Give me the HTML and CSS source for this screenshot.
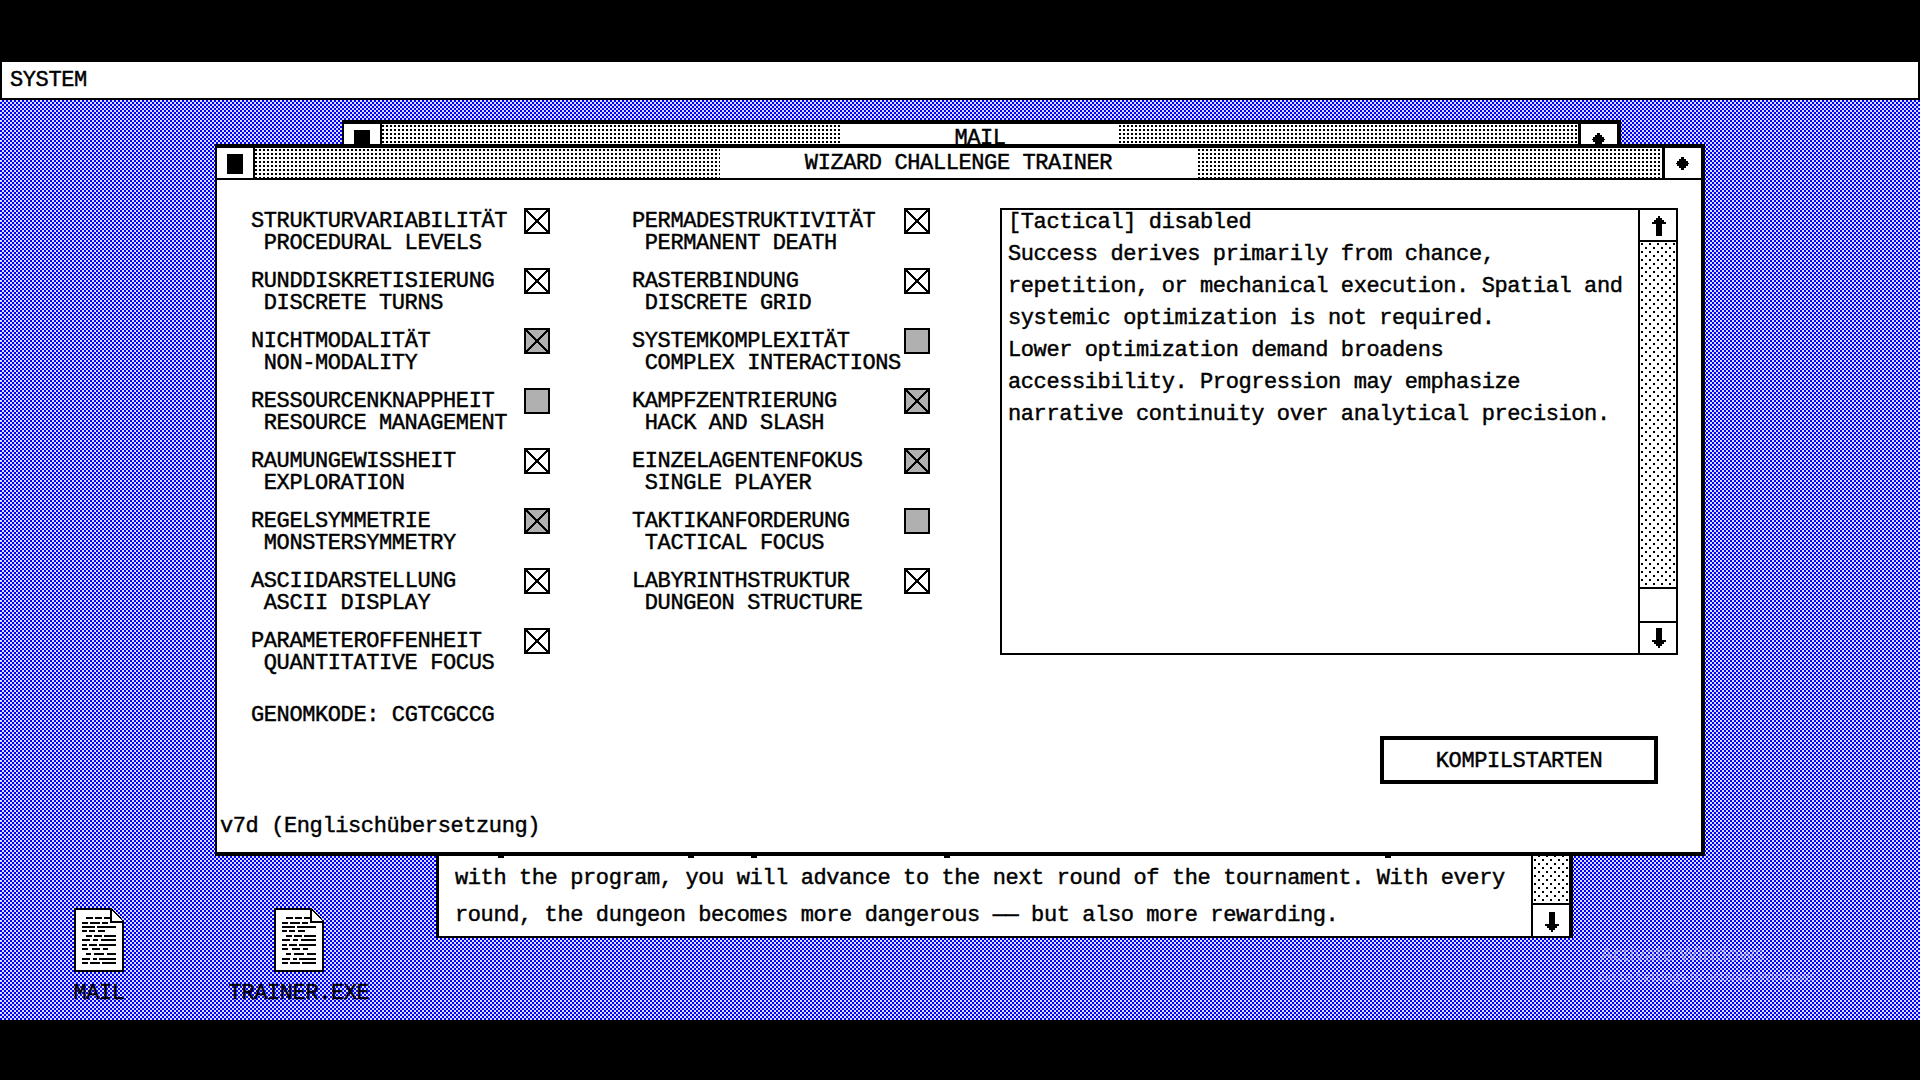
FILE: index.html
```html
<!DOCTYPE html>
<html lang="de">
<head>
<meta charset="utf-8">
<title>Wizard Challenge Trainer</title>
<link rel="stylesheet" href="styles.css">
</head>
<body>
<div class="screen">
  <header class="menubar">SYSTEM</header>
  <main class="desktop">
    <div class="desk-icon desk-icon-mail">
      <svg class="doc" viewBox="0 0 50 64" width="50" height="64"><path class="doc-sheet" d="M1 1H37L49 14V63H1Z"/><path class="doc-fold" d="M37 1V14H49"/><path class="doc-text" d="M12 10h7M21 10h7M30 10h6M8 15h6M16 15h10M28 15h6M8 19h13M23 19h19M8 23h5M15 23h6M24 23h7M12 28h6M20 28h8M30 28h12M8 32h8M19 32h5M27 32h15M8 37h5M15 37h8M25 37h17M8 41h6M18 41h8M29 41h5M12 46h5M20 46h10M33 46h9M8 51h8M19 51h4M25 51h17M8 55h6M16 55h10M28 55h14"/></svg>
      <span class="desk-label">MAIL</span>
    </div>
    <div class="desk-icon desk-icon-trainer">
      <svg class="doc" viewBox="0 0 50 64" width="50" height="64"><path class="doc-sheet" d="M1 1H37L49 14V63H1Z"/><path class="doc-fold" d="M37 1V14H49"/><path class="doc-text" d="M12 10h7M21 10h7M30 10h6M8 15h6M16 15h10M28 15h6M8 19h13M23 19h19M8 23h5M15 23h6M24 23h7M12 28h6M20 28h8M30 28h12M8 32h8M19 32h5M27 32h15M8 37h5M15 37h8M25 37h17M8 41h6M18 41h8M29 41h5M12 46h5M20 46h10M33 46h9M8 51h8M19 51h4M25 51h17M8 55h6M16 55h10M28 55h14"/></svg>
      <span class="desk-label">TRAINER.EXE</span>
    </div>

    <section class="mail-head">
      <div class="titlebar titlebar-mail">
        <div class="win-btn"><span class="close-mark"></span></div>
        <div class="stripes"></div>
        <div class="win-title win-title-mail">MAIL</div>
        <div class="stripes"></div>
        <div class="win-btn win-btn-right"><svg class="diamond" viewBox="0 0 13 13" width="13" height="13"><path d="M5 0h3v2h2v2h2v2h1v1h-1v2h-2v2H8v2H5v-2H3V9H1V7H0V6h1V4h2V2h2z"/></svg></div>
      </div>
    </section>

    <section class="mail-body">
      <span class="tick tick-a"></span><span class="tick tick-b"></span><span class="tick tick-c"></span><span class="tick tick-d"></span><span class="tick tick-e"></span>
      <div class="mail-text">
        <p>with the program, you will advance to the next round of the tournament. With every</p>
        <p>round, the dungeon becomes more dangerous —— but also more rewarding.</p>
      </div>
      <div class="scrollbar scrollbar-mail">
        <div class="scroll-track"></div>
        <div class="scroll-btn scroll-btn-mail"><svg class="arrow" viewBox="0 0 14 20" width="14" height="20"><path d="M4 0h6v12h4v2h-2v2h-2v2H8v2H6v-2H4v-2H2v-2H0v-2h4z"/></svg></div>
      </div>
    </section>

    <section class="trainer">
      <div class="titlebar">
        <div class="win-btn"><span class="close-mark"></span></div>
        <div class="stripes"></div>
        <div class="win-title">WIZARD CHALLENGE TRAINER</div>
        <div class="stripes"></div>
        <div class="win-btn win-btn-right"><svg class="diamond" viewBox="0 0 13 13" width="13" height="13"><path d="M5 0h3v2h2v2h2v2h1v1h-1v2h-2v2H8v2H5v-2H3V9H1V7H0V6h1V4h2V2h2z"/></svg></div>
      </div>
      <div class="trainer-body">
        <div class="trainer-grid">
          <div class="col">
            <div class="trait"><div class="trait-text">STRUKTURVARIABILITÄT<span class="sub">PROCEDURAL LEVELS</span></div><svg class="box" viewBox="0 0 26 26"><path d="M2 2L24 24M24 2L2 24"/></svg></div>
            <div class="trait"><div class="trait-text">RUNDDISKRETISIERUNG<span class="sub">DISCRETE TURNS</span></div><svg class="box" viewBox="0 0 26 26"><path d="M2 2L24 24M24 2L2 24"/></svg></div>
            <div class="trait"><div class="trait-text">NICHTMODALITÄT<span class="sub">NON-MODALITY</span></div><svg class="box box-grey" viewBox="0 0 26 26"><path d="M2 2L24 24M24 2L2 24"/></svg></div>
            <div class="trait"><div class="trait-text">RESSOURCENKNAPPHEIT<span class="sub">RESOURCE MANAGEMENT</span></div><svg class="box box-grey" viewBox="0 0 26 26"></svg></div>
            <div class="trait"><div class="trait-text">RAUMUNGEWISSHEIT<span class="sub">EXPLORATION</span></div><svg class="box" viewBox="0 0 26 26"><path d="M2 2L24 24M24 2L2 24"/></svg></div>
            <div class="trait"><div class="trait-text">REGELSYMMETRIE<span class="sub">MONSTERSYMMETRY</span></div><svg class="box box-grey" viewBox="0 0 26 26"><path d="M2 2L24 24M24 2L2 24"/></svg></div>
            <div class="trait"><div class="trait-text">ASCIIDARSTELLUNG<span class="sub">ASCII DISPLAY</span></div><svg class="box" viewBox="0 0 26 26"><path d="M2 2L24 24M24 2L2 24"/></svg></div>
            <div class="trait"><div class="trait-text">PARAMETEROFFENHEIT<span class="sub">QUANTITATIVE FOCUS</span></div><svg class="box" viewBox="0 0 26 26"><path d="M2 2L24 24M24 2L2 24"/></svg></div>
            <div class="genome">GENOMKODE: CGTCGCCG</div>
          </div>
          <div class="col">
            <div class="trait"><div class="trait-text">PERMADESTRUKTIVITÄT<span class="sub">PERMANENT DEATH</span></div><svg class="box" viewBox="0 0 26 26"><path d="M2 2L24 24M24 2L2 24"/></svg></div>
            <div class="trait"><div class="trait-text">RASTERBINDUNG<span class="sub">DISCRETE GRID</span></div><svg class="box" viewBox="0 0 26 26"><path d="M2 2L24 24M24 2L2 24"/></svg></div>
            <div class="trait"><div class="trait-text">SYSTEMKOMPLEXITÄT<span class="sub">COMPLEX INTERACTIONS</span></div><svg class="box box-grey" viewBox="0 0 26 26"></svg></div>
            <div class="trait"><div class="trait-text">KAMPFZENTRIERUNG<span class="sub">HACK AND SLASH</span></div><svg class="box box-grey" viewBox="0 0 26 26"><path d="M2 2L24 24M24 2L2 24"/></svg></div>
            <div class="trait"><div class="trait-text">EINZELAGENTENFOKUS<span class="sub">SINGLE PLAYER</span></div><svg class="box box-grey" viewBox="0 0 26 26"><path d="M2 2L24 24M24 2L2 24"/></svg></div>
            <div class="trait"><div class="trait-text">TAKTIKANFORDERUNG<span class="sub">TACTICAL FOCUS</span></div><svg class="box box-grey" viewBox="0 0 26 26"></svg></div>
            <div class="trait"><div class="trait-text">LABYRINTHSTRUKTUR<span class="sub">DUNGEON STRUCTURE</span></div><svg class="box" viewBox="0 0 26 26"><path d="M2 2L24 24M24 2L2 24"/></svg></div>
          </div>
          <div class="side">
            <div class="readout">
              <div class="readout-text">
                <p>[Tactical] disabled</p>
                <p>Success derives primarily from chance,</p>
                <p>repetition, or mechanical execution. Spatial and</p>
                <p>systemic optimization is not required.</p>
                <p>Lower optimization demand broadens</p>
                <p>accessibility. Progression may emphasize</p>
                <p>narrative continuity over analytical precision.</p>
              </div>
              <div class="scrollbar">
                <div class="scroll-btn scroll-btn-up"><svg class="arrow arrow-up" viewBox="0 0 14 20" width="14" height="20"><path d="M4 0h6v12h4v2h-2v2h-2v2H8v2H6v-2H4v-2H2v-2H0v-2h4z"/></svg></div>
                <div class="scroll-track"></div>
                <div class="scroll-thumb"></div>
                <div class="scroll-btn scroll-btn-down"><svg class="arrow" viewBox="0 0 14 20" width="14" height="20"><path d="M4 0h6v12h4v2h-2v2h-2v2H8v2H6v-2H4v-2H2v-2H0v-2h4z"/></svg></div>
              </div>
            </div>
            <button class="compile">KOMPILSTARTEN</button>
          </div>
        </div>
        <div class="version">v7d (Englischübersetzung)</div>
      </div>
    </section>

    <div class="watermark">
      <div class="wm-big">Activate Windows</div>
      <div class="wm-small">Go to Settings to activate Windows.</div>
    </div>
  </main>
</div>
</body>
</html>
```
FILE: styles.css
```css
* { box-sizing: border-box; }
html, body { margin: 0; padding: 0; background: #000; }
body {
  font-family: "Liberation Mono", "DejaVu Sans Mono", monospace;
  font-size: 22px;
  letter-spacing: -0.4px;
  font-weight: 400;
  -webkit-text-stroke: 0.45px #000;
  color: #000;
}
p { margin: 0; }

.screen {
  width: 1920px;
  height: 1080px;
  padding: 62px 0 60px;
  display: flex;
  flex-direction: column;
  overflow: hidden;
}
.menubar {
  height: 38px;
  flex: none;
  background: #fff;
  border: solid #000;
  border-width: 0 2px 2px;
  padding-left: 8px;
  line-height: 37px;
}
.desktop {
  position: relative;
  flex: 1;
  overflow: hidden;
  background: conic-gradient(#0000ff 25%, #dcdcff 0 50%, #0000ff 0 75%, #dcdcff 0) 0 0 / 4px 4px;
}

/* desktop icons */
.desk-icon {
  position: absolute;
  top: 808px;
  width: 160px;
  display: flex;
  flex-direction: column;
  align-items: center;
  gap: 11px;
}
.desk-icon-mail { left: 19px; }
.desk-icon-trainer { left: 219px; }
.desk-label { line-height: 22px; }
.doc { display: block; shape-rendering: crispEdges; }
.doc-sheet { fill: #fff; stroke: #000; stroke-width: 2.5; }
.doc-fold { fill: #fff; stroke: #000; stroke-width: 2; }
.doc-text { fill: none; stroke: #000; stroke-width: 2; }

/* title bars */
.titlebar {
  display: flex;
  height: 32px;
  flex: none;
  background: #fff;
  border-bottom: 2px solid #000;
}
.win-btn {
  width: 38px;
  flex: none;
  display: flex;
  align-items: center;
  justify-content: center;
  border-right: 2px solid #000;
}
.win-btn-right {
  width: 39px;
  padding-right: 2px;
  border-right: 0;
  border-left: 3px solid #000;
}
.close-mark {
  width: 16px;
  height: 20px;
  margin-top: 2px;
  background: #000;
}
.diamond { display: block; shape-rendering: crispEdges; }
.stripes {
  flex: 1;
  background: conic-gradient(at 2px 2px, transparent 75%, #000 0) 0 1px / 4px 4px, #fff;
}
.win-title {
  width: 478px;
  flex: none;
  text-align: center;
  line-height: 32px;
}
.win-title-mail { width: 277px; line-height: 30px; }

/* back window */
.mail-head {
  position: absolute;
  left: 342px;
  top: 20px;
  width: 1279px;
  height: 60px;
  border: solid #000;
  border-width: 4px 4px 0 2px;
  background: #fff;
}
.mail-body {
  position: absolute;
  left: 436px;
  top: 750px;
  width: 1137px;
  height: 88px;
  display: flex;
  background: #fff;
  border: solid #000;
  border-width: 0 4px 2px 3px;
}
.tick {
  position: absolute;
  top: 6px;
  width: 6px;
  height: 2px;
  background: #000;
}
.tick-a { left: 59px; }
.tick-b { left: 249px; }
.tick-c { left: 312px; }
.tick-d { left: 505px; }
.tick-e { left: 946px; }
.mail-text {
  flex: 1;
  padding: 10px 0 0 16px;
  line-height: 37px;
  white-space: nowrap;
}
.scrollbar {
  width: 38px;
  flex: none;
  display: flex;
  flex-direction: column;
  border-left: 2px solid #000;
  background: #fff;
}
.scrollbar-mail { width: 38px; }
.scroll-track {
  flex: 1;
  background:
    conic-gradient(at 2px 2px, transparent 75%, #000 0) 1px 1px / 8px 8px,
    conic-gradient(at 2px 2px, transparent 75%, #000 0) 5px 5px / 8px 8px,
    #fff;
}
.scroll-btn {
  flex: none;
  display: flex;
  align-items: center;
  justify-content: center;
  height: 31px;
  padding-left: 2px;
}
.scroll-btn-mail { height: 33px; border-top: 2px solid #000; padding-top: 2px; }
.scroll-btn-up { height: 32px; border-bottom: 2px solid #000; padding-top: 1px; }
.scroll-btn-down { height: 32px; border-top: 2px solid #000; }
.scroll-thumb { height: 34px; flex: none; border-top: 2px solid #000; }
.arrow { display: block; shape-rendering: crispEdges; }
.arrow-up { transform: scaleY(-1); }

/* front window */
.trainer {
  position: absolute;
  left: 215px;
  top: 44px;
  width: 1490px;
  height: 712px;
  display: flex;
  flex-direction: column;
  background: #fff;
  border: solid #000;
  border-width: 4px 4px 4px 2px;
}
.trainer-body {
  flex: 1;
  display: flex;
  flex-direction: column;
  justify-content: space-between;
}
.trainer-grid {
  display: grid;
  grid-template-columns: 299px 298px 678px;
  column-gap: 82px;
  padding: 28px 0 0 34px;
}
.trainer-grid .side { margin-left: -12px; }
.trait {
  height: 60px;
  display: flex;
  justify-content: space-between;
  align-items: flex-start;
}
.trait-text { line-height: 22px; padding-top: 3px; white-space: nowrap; }
.sub { display: block; padding-left: 12.8px; }
.box {
  width: 26px;
  height: 26px;
  flex: none;
  background: #fff;
  outline: 2px solid #000;
  outline-offset: -2px;
  shape-rendering: crispEdges;
}
.box path { fill: none; stroke: #000; stroke-width: 1.5; }
.box-grey { background: #b0b0b0; }
.genome { line-height: 22px; margin-top: 17px; }

.side { display: flex; flex-direction: column; align-items: flex-end; width: 678px; }
.readout {
  width: 678px;
  height: 447px;
  display: flex;
  overflow: hidden;
  border: 2px solid #000;
}
.readout-text {
  flex: 1;
  padding-left: 6px;
  margin-top: -3px;
  line-height: 32px;
  white-space: nowrap;
}
.compile {
  width: 278px;
  height: 48px;
  margin: 81px 20px 0 0;
  background: #fff;
  border: 4px solid #000;
  font: inherit;
  letter-spacing: inherit;
  color: #000;
  padding: 2px 0 0;
}
.version {
  padding: 0 0 14px 3px;
  line-height: 22px;
}

.watermark {
  position: absolute;
  left: 1600px;
  top: 840px;
  font-family: "Open Sans", sans-serif;
  font-weight: 400;
  letter-spacing: 0;
  -webkit-text-stroke: 0;
  color: rgba(190, 190, 190, 0.5);
  white-space: nowrap;
  pointer-events: none;
}
.wm-big { font-size: 20px; line-height: 27px; }
.wm-small { font-size: 13.5px; line-height: 19px; margin-left: -2px; }
```
